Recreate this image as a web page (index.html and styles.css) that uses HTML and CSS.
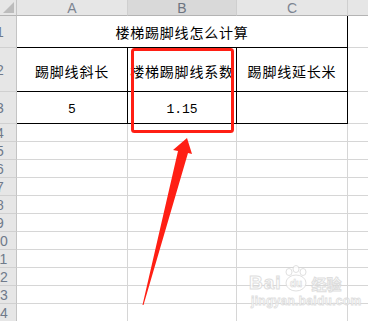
FILE: index.html
```html
<!DOCTYPE html>
<html lang="zh">
<head>
<meta charset="utf-8">
<title>楼梯踢脚线怎么计算</title>
<link rel="stylesheet" href="styles.css">
</head>
<body>
<div class="page">
  <div class="sheet">
    <div class="corner"><svg class="corner-tri" width="16" height="15" viewBox="0 0 16 15"><polygon points="3,13 14,13 14,2" fill="#bcbcbc"/></svg></div>
    <div class="colh">A</div>
    <div class="colh sel">B</div>
    <div class="colh">C</div>
    <div class="colh last"></div>

    <div class="rowh"><span>1</span></div>
    <div class="cell title black-r black-b">楼梯踢脚线怎么计算</div>
    <div class="cell last"></div>

    <div class="rowh"><span>2</span></div>
    <div class="cell label black-r black-b">踢脚线斜长</div>
    <div class="cell label clip black-r black-b">楼梯踢脚线系数</div>
    <div class="cell label black-r black-b">踢脚线延长米</div>
    <div class="cell last"></div>

    <div class="rowh"><span>3</span></div>
    <div class="cell num black-r black-b">5</div>
    <div class="cell num black-r black-b">1.15</div>
    <div class="cell black-r black-b"></div>
    <div class="cell last"></div>

    <div class="rowh"><span>4</span></div><div class="cell"></div><div class="cell"></div><div class="cell"></div><div class="cell last"></div>
    <div class="rowh"><span>5</span></div><div class="cell"></div><div class="cell"></div><div class="cell"></div><div class="cell last"></div>
    <div class="rowh"><span>6</span></div><div class="cell"></div><div class="cell"></div><div class="cell"></div><div class="cell last"></div>
    <div class="rowh"><span>7</span></div><div class="cell"></div><div class="cell"></div><div class="cell"></div><div class="cell last"></div>
    <div class="rowh"><span>8</span></div><div class="cell"></div><div class="cell"></div><div class="cell"></div><div class="cell last"></div>
    <div class="rowh"><span>9</span></div><div class="cell"></div><div class="cell"></div><div class="cell"></div><div class="cell last"></div>
    <div class="rowh"><span>10</span></div><div class="cell"></div><div class="cell"></div><div class="cell"></div><div class="cell last"></div>
    <div class="rowh"><span>11</span></div><div class="cell"></div><div class="cell"></div><div class="cell"></div><div class="cell last"></div>
    <div class="rowh"><span>12</span></div><div class="cell"></div><div class="cell"></div><div class="cell"></div><div class="cell last"></div>
    <div class="rowh"><span>13</span></div><div class="cell"></div><div class="cell"></div><div class="cell"></div><div class="cell last"></div>
    <div class="rowh"><span>14</span></div><div class="cell"></div><div class="cell"></div><div class="cell"></div><div class="cell last"></div>
  </div>

  <svg class="markup" width="368" height="321" viewBox="0 0 368 321">
    <rect x="132.5" y="49.5" width="100" height="82" rx="2" ry="2" fill="none" stroke="#ff1f14" stroke-width="3"/>
    <polygon points="187,138 192,154 188,153 143.5,305 142.5,305 178,151 173,150" fill="#ff1f14"/>
  </svg>

  <div class="watermark">
    <div class="wm-line1">
      <span class="wm-bai">Bai</span>
      <svg class="wm-paw" width="26" height="27" viewBox="0 0 26 27">
        <g fill="#ffffff" stroke="#dcdcdc" stroke-width="1">
          <ellipse cx="6" cy="7" rx="3" ry="3.5"/>
          <ellipse cx="13" cy="4" rx="3" ry="3.5"/>
          <ellipse cx="20" cy="7" rx="3" ry="3.5"/>
          <ellipse cx="13" cy="18" rx="10" ry="8"/>
        </g>
        <text x="13" y="22" text-anchor="middle" class="wm-du">du</text>
      </svg>
      <span class="wm-jy">经验</span>
    </div>
    <div class="wm-line2">jingyan.baidu.com</div>
  </div>
</div>
</body>
</html>
```

FILE: styles.css
```css
html, body {
  margin: 0;
  padding: 0;
  background: #ffffff;
  overflow: hidden;
}

.page {
  position: relative;
  width: 368px;
  height: 321px;
  overflow: hidden;
}

.sheet {
  display: grid;
  grid-template-columns: 17px 111px 109px 111px 40px;
  grid-template-rows: 16px 32px 44px 32px repeat(11, 18px);
  font-family: "Noto Sans CJK SC", "Noto Sans", sans-serif;
  color: #000;
}

.corner {
  background: #e6e6e6;
  border-right: 1px solid #c4c4c4;
  border-bottom: 1px solid #b4b4b4;
  box-sizing: border-box;
  position: relative;
}

.corner-tri {
  display: block;
}

.colh {
  background: #e6e6e6;
  border-right: 1px solid #cfcfcf;
  border-bottom: 1px solid #b4b4b4;
  box-sizing: border-box;
  display: flex;
  align-items: center;
  justify-content: center;
  font-family: "Liberation Sans", Arial, sans-serif;
  font-size: 14px;
  line-height: 1;
  color: #7c8491;
  padding-top: 1px;
}

.colh.sel {
  background: #d9d9d9;
  color: #6d7480;
}

.colh.last {
  border-right: none;
}

.rowh {
  background: #e6e6e6;
  border-right: 1px solid #c4c4c4;
  border-bottom: 1px solid #d0d0d0;
  box-sizing: border-box;
  overflow: hidden;
  display: flex;
  align-items: center;
}

.rowh span {
  flex: 0 0 34px;
  margin-left: -17px;
  text-align: center;
  font-family: "Liberation Sans", Arial, sans-serif;
  font-size: 14px;
  line-height: 1;
  color: #6f7a8a;
}

.cell {
  border-right: 1px solid #d6d6d6;
  border-bottom: 1px solid #d6d6d6;
  box-sizing: border-box;
  display: flex;
  align-items: center;
  justify-content: center;
  white-space: nowrap;
  overflow: hidden;
  min-width: 0;
}

.cell.last {
  border-right: none;
}

.black-r {
  border-right-color: #000;
}

.black-b {
  border-bottom-color: #000;
}

.title {
  grid-column: span 3;
  font-size: 14px;
  letter-spacing: 0.8px;
  line-height: 1;
  padding-top: 1px;
}

.label {
  font-size: 14px;
  letter-spacing: 0.8px;
  line-height: 1;
  padding-top: 3px;
}

.clip {
  justify-content: center;
}

.num {
  font-family: "Liberation Mono", "DejaVu Sans Mono", monospace;
  font-size: 13px;
  line-height: 1;
  padding-top: 3px;
}

.markup {
  position: absolute;
  left: 0;
  top: 0;
  pointer-events: none;
}

.watermark {
  position: absolute;
  left: 249px;
  top: 265px;
  opacity: 0.85;
  pointer-events: none;
}

.wm-line1 {
  display: flex;
  align-items: flex-end;
  gap: 1px;
}

.wm-bai {
  font-family: "Liberation Sans", Arial, sans-serif;
  font-weight: bold;
  font-size: 19px;
  line-height: 1;
  color: #ffffff;
  -webkit-text-stroke: 1px #d9d9d9;
  letter-spacing: 1px;
}

.wm-paw {
  display: block;
}

.wm-du {
  font-family: "Liberation Sans", Arial, sans-serif;
  font-weight: bold;
  font-size: 10px;
  fill: #ffffff;
  stroke: #d4d4d4;
  stroke-width: 0.6;
}

.wm-jy {
  font-family: "Noto Sans CJK SC", sans-serif;
  font-weight: bold;
  font-size: 15px;
  line-height: 1;
  color: #ffffff;
  -webkit-text-stroke: 1px #d9d9d9;
  margin-left: 2px;
  margin-bottom: 1px;
}

.wm-line2 {
  font-family: "Liberation Sans", Arial, sans-serif;
  font-weight: bold;
  font-size: 12px;
  line-height: 1;
  margin-top: 3px;
  margin-left: 2px;
  color: #ffffff;
  -webkit-text-stroke: 0.8px #d9d9d9;
  letter-spacing: 0.3px;
}
```
